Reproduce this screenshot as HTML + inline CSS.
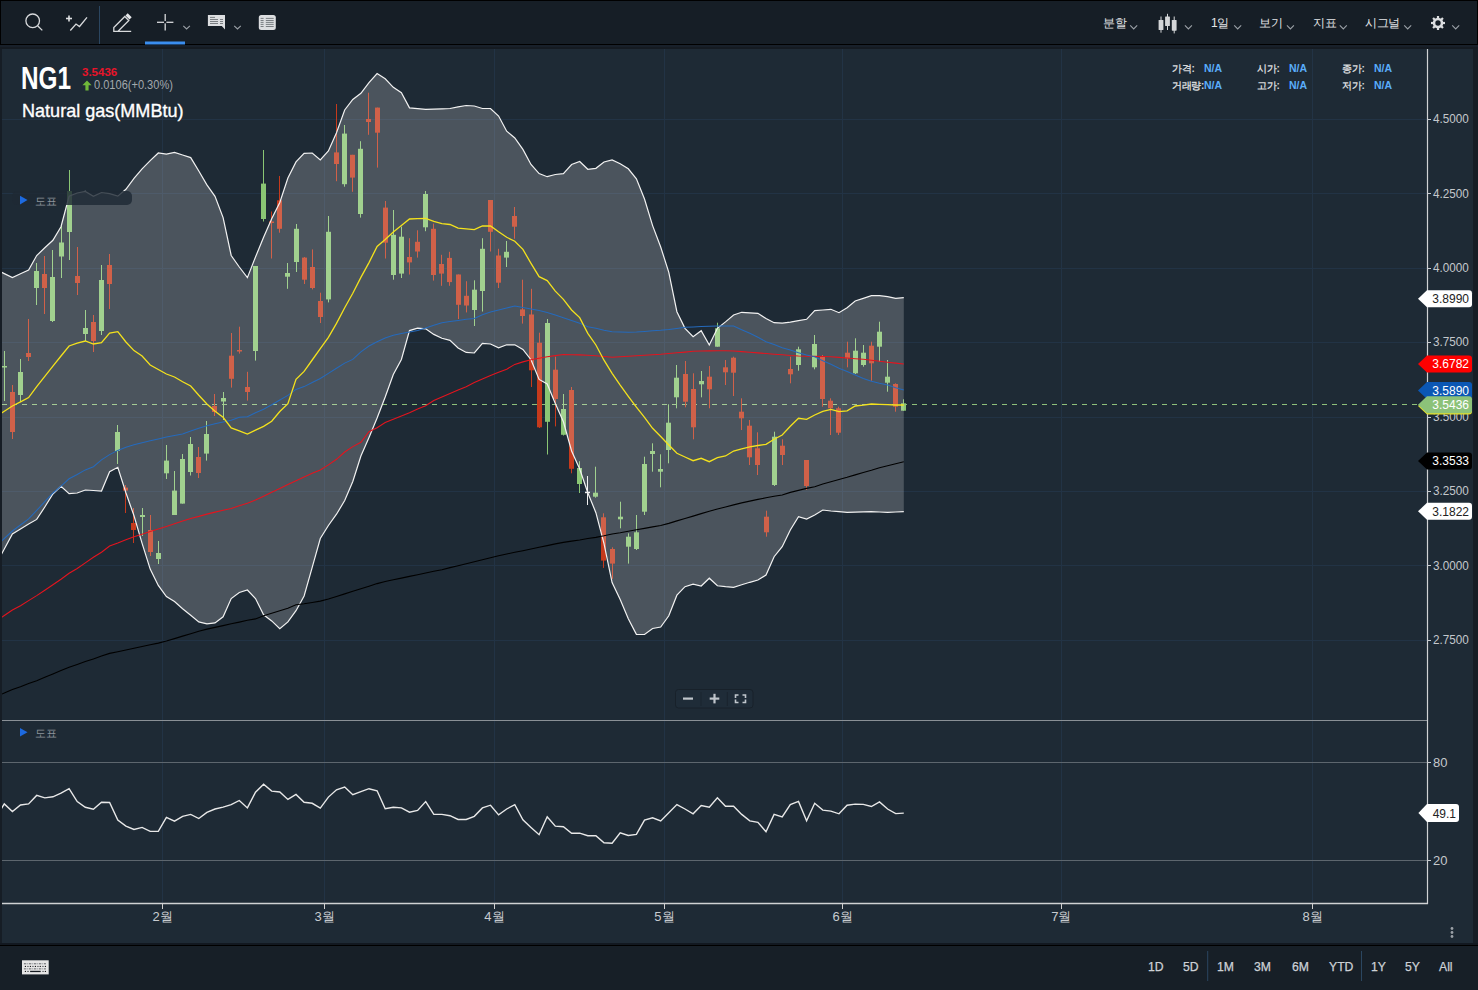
<!DOCTYPE html>
<html><head><meta charset="utf-8">
<style>
html,body{margin:0;padding:0;}
body{width:1478px;height:990px;overflow:hidden;background:#161d25;position:relative;font-family:"Liberation Sans",sans-serif;}
.abs{position:absolute;}
svg text{font-family:"Liberation Sans",sans-serif;}
.ax{font-size:12.7px;fill:#c4c8cc;}
.dt{font-size:13px;fill:#c8ccd0;}
.tg{font-size:12px;}
.tb{color:#e4e6e8;font-size:12px;letter-spacing:-0.3px;}
.bt{font-size:12.2px;color:#cdd1d6;position:absolute;top:960px;-webkit-text-stroke:0.25px #cdd1d6;}
</style></head>
<body>
<!-- toolbar -->
<div class="abs" style="left:0;top:0;width:1478px;height:44px;background:#161e26;border-top:1px solid #000;border-left:1px solid #000;border-right:1px solid #000;box-sizing:border-box;"></div>
<div class="abs" style="left:0;top:44px;width:1478px;height:1px;background:#000;"></div>
<div class="abs" style="left:0;top:45px;width:1478px;height:2px;background:#18202a;"></div><div class="abs" style="left:0;top:47px;width:1478px;height:2px;background:#151b22;"></div>
<!-- chart area bg -->
<div class="abs" style="left:2px;top:49px;width:1471px;height:894px;background:#1e2a35;"></div>
<div class="abs" style="left:0;top:943px;width:1478px;height:2px;background:#121820;"></div>
<div class="abs" style="left:0;top:945px;width:1478px;height:1px;background:#000;"></div>
<div class="abs" style="left:0;top:946px;width:1478px;height:44px;background:#171f27;"></div>
<svg class="abs" style="left:0;top:0" width="1478" height="990" viewBox="0 0 1478 990">
<defs>
<clipPath id="cm"><rect x="2" y="49" width="1425" height="671"/></clipPath>
<clipPath id="cr"><rect x="2" y="721" width="1425" height="182"/></clipPath>
</defs>
<g stroke="#223345" stroke-width="1">
<line x1="2" y1="119.5" x2="1427" y2="119.5"/>
<line x1="2" y1="193.5" x2="1427" y2="193.5"/>
<line x1="2" y1="268.5" x2="1427" y2="268.5"/>
<line x1="2" y1="342.5" x2="1427" y2="342.5"/>
<line x1="2" y1="417.5" x2="1427" y2="417.5"/>
<line x1="2" y1="491.5" x2="1427" y2="491.5"/>
<line x1="2" y1="565.5" x2="1427" y2="565.5"/>
<line x1="2" y1="640.5" x2="1427" y2="640.5"/>
<line x1="162.5" y1="49" x2="162.5" y2="903"/>
<line x1="324.5" y1="49" x2="324.5" y2="903"/>
<line x1="494.5" y1="49" x2="494.5" y2="903"/>
<line x1="664.5" y1="49" x2="664.5" y2="903"/>
<line x1="842.5" y1="49" x2="842.5" y2="903"/>
<line x1="1061.5" y1="49" x2="1061.5" y2="903"/>
<line x1="1312.5" y1="49" x2="1312.5" y2="903"/>
</g>
<g clip-path="url(#cm)">
<line x1="2" y1="404.5" x2="1418" y2="404.5" stroke="#8fbf7a" stroke-width="1.2" stroke-dasharray="5 5"/>
<rect x="4" y="351.0" width="1" height="50.0" fill="#8ac674"/>
<rect x="2" y="366.0" width="5" height="1.5" fill="#8ac674"/>
<rect x="12" y="385.0" width="1" height="54.0" fill="#c53a1c"/>
<rect x="10" y="392.0" width="5" height="40.0" fill="#c53a1c"/>
<rect x="20" y="359.0" width="1" height="43.0" fill="#8ac674"/>
<rect x="18" y="372.0" width="5" height="23.0" fill="#8ac674"/>
<rect x="28" y="319.0" width="1" height="42.0" fill="#c53a1c"/>
<rect x="26" y="353.0" width="5" height="4.0" fill="#c53a1c"/>
<rect x="36" y="263.0" width="1" height="42.0" fill="#8ac674"/>
<rect x="34" y="271.0" width="5" height="17.0" fill="#8ac674"/>
<rect x="44" y="256.0" width="1" height="58.0" fill="#c53a1c"/>
<rect x="42" y="274.0" width="5" height="14.0" fill="#c53a1c"/>
<rect x="52" y="250.0" width="1" height="72.0" fill="#8ac674"/>
<rect x="50" y="277.0" width="5" height="44.0" fill="#8ac674"/>
<rect x="61" y="226.0" width="1" height="52.0" fill="#8ac674"/>
<rect x="59" y="242.5" width="5" height="14.0" fill="#8ac674"/>
<rect x="69" y="170.0" width="1" height="90.0" fill="#8ac674"/>
<rect x="67" y="191.0" width="5" height="41.0" fill="#8ac674"/>
<rect x="77" y="247.0" width="1" height="48.0" fill="#c53a1c"/>
<rect x="75" y="276.0" width="5" height="7.0" fill="#c53a1c"/>
<rect x="85" y="310.0" width="1" height="31.0" fill="#8ac674"/>
<rect x="83" y="328.0" width="5" height="6.0" fill="#8ac674"/>
<rect x="93" y="315.0" width="1" height="37.0" fill="#c53a1c"/>
<rect x="91" y="322.0" width="5" height="19.0" fill="#c53a1c"/>
<rect x="101" y="265.0" width="1" height="70.0" fill="#8ac674"/>
<rect x="99" y="280.0" width="5" height="51.0" fill="#8ac674"/>
<rect x="109" y="254.0" width="1" height="55.0" fill="#c53a1c"/>
<rect x="107" y="265.0" width="5" height="19.0" fill="#c53a1c"/>
<rect x="117" y="425.0" width="1" height="39.0" fill="#8ac674"/>
<rect x="115" y="432.0" width="5" height="19.0" fill="#8ac674"/>
<rect x="125" y="485.0" width="1" height="28.0" fill="#c53a1c"/>
<rect x="123" y="487.6" width="5" height="3.0" fill="#c53a1c"/>
<rect x="133" y="508.0" width="1" height="35.0" fill="#c53a1c"/>
<rect x="131" y="523.0" width="5" height="7.0" fill="#c53a1c"/>
<rect x="142" y="508.0" width="1" height="28.0" fill="#8ac674"/>
<rect x="140" y="515.0" width="5" height="2.0" fill="#8ac674"/>
<rect x="150" y="515.0" width="1" height="41.0" fill="#c53a1c"/>
<rect x="148" y="530.0" width="5" height="22.0" fill="#c53a1c"/>
<rect x="158" y="541.0" width="1" height="23.0" fill="#8ac674"/>
<rect x="156" y="553.0" width="5" height="6.0" fill="#8ac674"/>
<rect x="166" y="445.0" width="1" height="34.0" fill="#8ac674"/>
<rect x="164" y="460.6" width="5" height="12.7" fill="#8ac674"/>
<rect x="174" y="471.0" width="1" height="44.0" fill="#8ac674"/>
<rect x="172" y="490.6" width="5" height="24.4" fill="#8ac674"/>
<rect x="182" y="454.0" width="1" height="49.6" fill="#8ac674"/>
<rect x="180" y="459.0" width="5" height="44.6" fill="#8ac674"/>
<rect x="190" y="437.0" width="1" height="38.5" fill="#8ac674"/>
<rect x="188" y="444.0" width="5" height="28.0" fill="#8ac674"/>
<rect x="198" y="447.0" width="1" height="31.0" fill="#c53a1c"/>
<rect x="196" y="457.0" width="5" height="16.0" fill="#c53a1c"/>
<rect x="206" y="421.0" width="1" height="39.6" fill="#8ac674"/>
<rect x="204" y="434.0" width="5" height="19.6" fill="#8ac674"/>
<rect x="214" y="394.0" width="1" height="22.0" fill="#c53a1c"/>
<rect x="212" y="406.0" width="5" height="6.0" fill="#c53a1c"/>
<rect x="223" y="392.0" width="1" height="28.0" fill="#8ac674"/>
<rect x="221" y="398.0" width="5" height="3.5" fill="#8ac674"/>
<rect x="231" y="333.0" width="1" height="54.6" fill="#c53a1c"/>
<rect x="229" y="355.7" width="5" height="23.1" fill="#c53a1c"/>
<rect x="239" y="326.7" width="1" height="26.9" fill="#c53a1c"/>
<rect x="237" y="350.0" width="5" height="1.5" fill="#c53a1c"/>
<rect x="247" y="371.8" width="1" height="28.8" fill="#c53a1c"/>
<rect x="245" y="387.0" width="5" height="5.0" fill="#c53a1c"/>
<rect x="255" y="266.0" width="1" height="94.6" fill="#8ac674"/>
<rect x="253" y="266.0" width="5" height="85.0" fill="#8ac674"/>
<rect x="263" y="150.0" width="1" height="71.5" fill="#8ac674"/>
<rect x="261" y="183.6" width="5" height="35.4" fill="#8ac674"/>
<rect x="271" y="211.5" width="1" height="47.0" fill="#c53a1c"/>
<rect x="269" y="221.5" width="5" height="1.5" fill="#c53a1c"/>
<rect x="279" y="176.0" width="1" height="56.7" fill="#c53a1c"/>
<rect x="277" y="200.3" width="5" height="28.5" fill="#c53a1c"/>
<rect x="287" y="263.0" width="1" height="25.8" fill="#8ac674"/>
<rect x="285" y="273.0" width="5" height="3.7" fill="#8ac674"/>
<rect x="296" y="224.0" width="1" height="48.0" fill="#8ac674"/>
<rect x="294" y="228.8" width="5" height="33.2" fill="#8ac674"/>
<rect x="304" y="257.0" width="1" height="27.0" fill="#c53a1c"/>
<rect x="302" y="257.6" width="5" height="22.1" fill="#c53a1c"/>
<rect x="312" y="249.4" width="1" height="40.0" fill="#c53a1c"/>
<rect x="310" y="267.0" width="5" height="21.0" fill="#c53a1c"/>
<rect x="320" y="292.7" width="1" height="30.3" fill="#c53a1c"/>
<rect x="318" y="301.0" width="5" height="16.0" fill="#c53a1c"/>
<rect x="328" y="216.0" width="1" height="86.4" fill="#8ac674"/>
<rect x="326" y="231.8" width="5" height="67.6" fill="#8ac674"/>
<rect x="336" y="104.0" width="1" height="77.2" fill="#c53a1c"/>
<rect x="334" y="152.4" width="5" height="11.6" fill="#c53a1c"/>
<rect x="344" y="125.0" width="1" height="61.7" fill="#8ac674"/>
<rect x="342" y="133.6" width="5" height="50.6" fill="#8ac674"/>
<rect x="352" y="154.8" width="1" height="37.0" fill="#c53a1c"/>
<rect x="350" y="154.8" width="5" height="22.8" fill="#c53a1c"/>
<rect x="360" y="141.2" width="1" height="76.4" fill="#8ac674"/>
<rect x="358" y="148.8" width="5" height="65.2" fill="#8ac674"/>
<rect x="368" y="92.7" width="1" height="42.1" fill="#c53a1c"/>
<rect x="366" y="119.0" width="5" height="3.0" fill="#c53a1c"/>
<rect x="377" y="107.6" width="1" height="60.0" fill="#c53a1c"/>
<rect x="375" y="107.6" width="5" height="25.1" fill="#c53a1c"/>
<rect x="385" y="201.0" width="1" height="57.5" fill="#c53a1c"/>
<rect x="383" y="207.6" width="5" height="35.1" fill="#c53a1c"/>
<rect x="393" y="210.0" width="1" height="69.7" fill="#8ac674"/>
<rect x="391" y="234.8" width="5" height="40.2" fill="#8ac674"/>
<rect x="401" y="226.7" width="1" height="51.3" fill="#8ac674"/>
<rect x="399" y="236.7" width="5" height="36.9" fill="#8ac674"/>
<rect x="409" y="238.2" width="1" height="36.3" fill="#c53a1c"/>
<rect x="407" y="257.0" width="5" height="5.4" fill="#c53a1c"/>
<rect x="417" y="230.3" width="1" height="27.3" fill="#c53a1c"/>
<rect x="415" y="241.8" width="5" height="9.7" fill="#c53a1c"/>
<rect x="425" y="191.0" width="1" height="40.2" fill="#8ac674"/>
<rect x="423" y="194.0" width="5" height="33.3" fill="#8ac674"/>
<rect x="433" y="223.6" width="1" height="57.0" fill="#c53a1c"/>
<rect x="431" y="228.8" width="5" height="46.2" fill="#c53a1c"/>
<rect x="441" y="254.8" width="1" height="31.0" fill="#c53a1c"/>
<rect x="439" y="264.0" width="5" height="9.6" fill="#c53a1c"/>
<rect x="449" y="251.8" width="1" height="34.0" fill="#c53a1c"/>
<rect x="447" y="257.9" width="5" height="24.2" fill="#c53a1c"/>
<rect x="458" y="274.5" width="1" height="44.5" fill="#c53a1c"/>
<rect x="456" y="274.5" width="5" height="30.3" fill="#c53a1c"/>
<rect x="466" y="281.2" width="1" height="31.2" fill="#c53a1c"/>
<rect x="464" y="295.8" width="5" height="9.7" fill="#c53a1c"/>
<rect x="474" y="280.3" width="1" height="45.7" fill="#8ac674"/>
<rect x="472" y="289.7" width="5" height="20.3" fill="#8ac674"/>
<rect x="482" y="238.2" width="1" height="73.3" fill="#8ac674"/>
<rect x="480" y="248.8" width="5" height="42.2" fill="#8ac674"/>
<rect x="490" y="200.0" width="1" height="51.5" fill="#c53a1c"/>
<rect x="488" y="200.0" width="5" height="31.8" fill="#c53a1c"/>
<rect x="498" y="248.8" width="1" height="39.2" fill="#c53a1c"/>
<rect x="496" y="255.5" width="5" height="27.2" fill="#c53a1c"/>
<rect x="506" y="241.0" width="1" height="26.0" fill="#8ac674"/>
<rect x="504" y="251.8" width="5" height="5.8" fill="#8ac674"/>
<rect x="514" y="207.0" width="1" height="31.8" fill="#c53a1c"/>
<rect x="512" y="216.0" width="5" height="10.7" fill="#c53a1c"/>
<rect x="522" y="279.7" width="1" height="43.9" fill="#c53a1c"/>
<rect x="520" y="309.4" width="5" height="6.6" fill="#c53a1c"/>
<rect x="531" y="288.8" width="1" height="98.2" fill="#c53a1c"/>
<rect x="529" y="314.5" width="5" height="55.8" fill="#c53a1c"/>
<rect x="539" y="332.7" width="1" height="95.3" fill="#c53a1c"/>
<rect x="537" y="342.7" width="5" height="84.6" fill="#c53a1c"/>
<rect x="547" y="319.0" width="1" height="135.5" fill="#8ac674"/>
<rect x="545" y="323.0" width="5" height="98.8" fill="#8ac674"/>
<rect x="555" y="356.7" width="1" height="69.7" fill="#c53a1c"/>
<rect x="553" y="369.7" width="5" height="29.3" fill="#c53a1c"/>
<rect x="563" y="394.0" width="1" height="41.5" fill="#8ac674"/>
<rect x="561" y="409.0" width="5" height="25.8" fill="#8ac674"/>
<rect x="571" y="387.0" width="1" height="86.3" fill="#c53a1c"/>
<rect x="569" y="390.0" width="5" height="78.8" fill="#c53a1c"/>
<rect x="579" y="461.2" width="1" height="31.8" fill="#8ac674"/>
<rect x="577" y="468.0" width="5" height="16.0" fill="#8ac674"/>
<rect x="587" y="476.0" width="1" height="29.0" fill="#f0f0f0"/>
<rect x="585" y="491.7" width="5" height="1.5" fill="#f0f0f0"/>
<rect x="595" y="466.7" width="1" height="31.0" fill="#8ac674"/>
<rect x="593" y="492.7" width="5" height="4.0" fill="#8ac674"/>
<rect x="603" y="513.3" width="1" height="54.6" fill="#c53a1c"/>
<rect x="601" y="517.3" width="5" height="43.3" fill="#c53a1c"/>
<rect x="612" y="547.3" width="1" height="31.5" fill="#c53a1c"/>
<rect x="610" y="549.0" width="5" height="14.6" fill="#c53a1c"/>
<rect x="620" y="501.7" width="1" height="26.6" fill="#8ac674"/>
<rect x="618" y="516.7" width="5" height="2.6" fill="#8ac674"/>
<rect x="628" y="533.3" width="1" height="30.3" fill="#8ac674"/>
<rect x="626" y="536.7" width="5" height="10.0" fill="#8ac674"/>
<rect x="636" y="515.0" width="1" height="35.0" fill="#8ac674"/>
<rect x="634" y="532.3" width="5" height="16.7" fill="#8ac674"/>
<rect x="644" y="456.7" width="1" height="58.3" fill="#8ac674"/>
<rect x="642" y="464.0" width="5" height="47.7" fill="#8ac674"/>
<rect x="652" y="443.3" width="1" height="28.4" fill="#8ac674"/>
<rect x="650" y="451.0" width="5" height="3.0" fill="#8ac674"/>
<rect x="660" y="454.3" width="1" height="33.0" fill="#8ac674"/>
<rect x="658" y="469.0" width="5" height="2.7" fill="#8ac674"/>
<rect x="668" y="404.3" width="1" height="59.0" fill="#8ac674"/>
<rect x="666" y="422.7" width="5" height="27.3" fill="#8ac674"/>
<rect x="676" y="365.0" width="1" height="43.3" fill="#8ac674"/>
<rect x="674" y="377.7" width="5" height="19.6" fill="#8ac674"/>
<rect x="685" y="361.0" width="1" height="46.3" fill="#c53a1c"/>
<rect x="683" y="374.0" width="5" height="27.7" fill="#c53a1c"/>
<rect x="693" y="373.3" width="1" height="66.0" fill="#c53a1c"/>
<rect x="691" y="389.0" width="5" height="38.3" fill="#c53a1c"/>
<rect x="701" y="371.0" width="1" height="26.3" fill="#8ac674"/>
<rect x="699" y="381.0" width="5" height="3.3" fill="#8ac674"/>
<rect x="709" y="366.0" width="1" height="42.3" fill="#c53a1c"/>
<rect x="707" y="376.7" width="5" height="12.6" fill="#c53a1c"/>
<rect x="717" y="322.7" width="1" height="24.0" fill="#8ac674"/>
<rect x="715" y="328.3" width="5" height="18.4" fill="#8ac674"/>
<rect x="725" y="360.0" width="1" height="25.0" fill="#c53a1c"/>
<rect x="723" y="367.3" width="5" height="5.0" fill="#c53a1c"/>
<rect x="733" y="356.7" width="1" height="39.3" fill="#c53a1c"/>
<rect x="731" y="357.7" width="5" height="15.0" fill="#c53a1c"/>
<rect x="741" y="398.3" width="1" height="31.7" fill="#c53a1c"/>
<rect x="739" y="411.7" width="5" height="6.6" fill="#c53a1c"/>
<rect x="749" y="420.0" width="1" height="45.0" fill="#c53a1c"/>
<rect x="747" y="425.7" width="5" height="31.6" fill="#c53a1c"/>
<rect x="757" y="432.3" width="1" height="42.7" fill="#c53a1c"/>
<rect x="755" y="448.3" width="5" height="16.7" fill="#c53a1c"/>
<rect x="766" y="510.7" width="1" height="26.0" fill="#c53a1c"/>
<rect x="764" y="516.7" width="5" height="15.6" fill="#c53a1c"/>
<rect x="774" y="431.7" width="1" height="54.3" fill="#8ac674"/>
<rect x="772" y="436.7" width="5" height="48.3" fill="#8ac674"/>
<rect x="782" y="439.3" width="1" height="25.7" fill="#c53a1c"/>
<rect x="780" y="445.7" width="5" height="9.3" fill="#c53a1c"/>
<rect x="790" y="356.7" width="1" height="26.6" fill="#c53a1c"/>
<rect x="788" y="369.0" width="5" height="5.3" fill="#c53a1c"/>
<rect x="798" y="346.7" width="1" height="24.0" fill="#8ac674"/>
<rect x="796" y="349.3" width="5" height="15.7" fill="#8ac674"/>
<rect x="806" y="460.0" width="1" height="30.0" fill="#c53a1c"/>
<rect x="804" y="460.0" width="5" height="26.0" fill="#c53a1c"/>
<rect x="814" y="335.0" width="1" height="34.3" fill="#8ac674"/>
<rect x="812" y="344.0" width="5" height="23.3" fill="#8ac674"/>
<rect x="822" y="355.0" width="1" height="51.7" fill="#c53a1c"/>
<rect x="820" y="356.7" width="5" height="42.3" fill="#c53a1c"/>
<rect x="830" y="398.3" width="1" height="36.7" fill="#c53a1c"/>
<rect x="828" y="400.7" width="5" height="7.6" fill="#c53a1c"/>
<rect x="838" y="406.7" width="1" height="28.3" fill="#c53a1c"/>
<rect x="836" y="408.3" width="5" height="24.4" fill="#c53a1c"/>
<rect x="847" y="341.7" width="1" height="25.6" fill="#c53a1c"/>
<rect x="845" y="352.7" width="5" height="5.6" fill="#c53a1c"/>
<rect x="855" y="338.3" width="1" height="35.7" fill="#8ac674"/>
<rect x="853" y="350.7" width="5" height="22.6" fill="#8ac674"/>
<rect x="863" y="345.0" width="1" height="21.7" fill="#8ac674"/>
<rect x="861" y="352.7" width="5" height="12.3" fill="#8ac674"/>
<rect x="871" y="341.7" width="1" height="39.0" fill="#c53a1c"/>
<rect x="869" y="345.7" width="5" height="17.6" fill="#c53a1c"/>
<rect x="879" y="321.7" width="1" height="40.0" fill="#8ac674"/>
<rect x="877" y="331.7" width="5" height="15.0" fill="#8ac674"/>
<rect x="887" y="360.0" width="1" height="31.7" fill="#8ac674"/>
<rect x="885" y="376.7" width="5" height="6.0" fill="#8ac674"/>
<rect x="895" y="383.3" width="1" height="28.4" fill="#c53a1c"/>
<rect x="893" y="384.0" width="5" height="22.7" fill="#c53a1c"/>
<rect x="903" y="399.3" width="1" height="11.4" fill="#8ac674"/>
<rect x="901" y="403.3" width="5" height="7.4" fill="#8ac674"/>
<polygon points="-3.8,269.6 4.3,273.6 12.4,277.6 20.5,273.8 28.6,270.0 36.7,255.5 44.8,247.8 52.9,240.3 61.0,226.7 69.1,196.3 77.2,193.0 85.3,191.4 93.4,196.3 101.5,192.5 109.6,193.6 117.8,196.1 125.9,189.3 134.0,178.4 142.1,168.9 150.2,160.6 158.3,153.0 166.4,154.1 174.5,152.4 182.6,155.0 190.7,157.6 198.8,171.0 206.9,184.9 215.0,196.4 223.1,217.6 231.2,255.5 239.3,267.0 247.4,277.6 255.5,257.0 263.6,237.3 271.7,218.7 279.8,202.4 287.9,178.0 296.0,161.9 304.1,153.3 312.2,153.0 320.3,160.0 328.4,151.0 336.5,132.7 344.7,110.0 352.8,99.4 360.9,93.3 369.0,82.7 377.1,73.6 385.2,78.8 393.3,87.3 401.4,92.7 409.5,107.9 417.6,108.6 425.7,109.4 433.8,109.1 441.9,108.8 450.0,108.5 458.1,106.9 466.2,105.5 474.3,106.0 482.4,108.5 490.5,108.5 498.6,116.0 506.7,131.2 514.8,138.0 522.9,149.4 531.0,164.5 539.1,173.6 547.2,176.7 555.3,174.5 563.4,173.6 571.6,164.5 579.7,161.5 587.8,169.3 595.9,168.3 604.0,162.0 612.1,160.0 620.2,163.7 628.3,168.8 636.4,178.9 644.5,199.0 652.6,225.6 660.7,247.0 668.8,272.3 676.9,311.7 685.0,328.3 693.1,336.7 701.2,330.7 709.3,345.0 717.4,328.3 725.5,321.9 733.6,315.0 741.7,312.3 749.8,312.8 757.9,313.3 766.0,318.6 774.1,322.7 782.2,323.2 790.3,322.1 798.5,320.7 806.6,319.3 814.7,310.7 822.8,310.0 830.9,309.3 839.0,312.7 847.1,307.7 855.2,301.0 863.3,298.4 871.4,295.7 879.5,295.7 887.6,296.7 895.7,298.3 903.8,297.7 903.8,511.7 895.7,512.0 887.6,512.3 879.5,512.0 871.4,511.7 863.3,511.9 855.2,512.1 847.1,512.3 839.0,511.6 830.9,511.0 822.8,510.0 814.7,515.0 806.6,519.0 798.5,516.7 790.3,530.0 782.2,546.7 774.1,556.7 766.0,575.0 757.9,580.0 749.8,582.3 741.7,584.8 733.6,587.3 725.5,586.7 717.4,585.8 709.3,578.2 701.2,586.0 693.1,584.2 685.0,586.7 676.9,595.2 668.8,615.8 660.7,627.0 652.6,628.5 644.5,634.5 636.4,634.3 628.3,618.8 620.2,599.4 612.1,582.5 604.0,543.6 595.9,512.7 587.8,492.7 579.7,469.0 571.6,451.0 563.4,421.8 555.3,403.6 547.2,384.0 539.1,379.4 531.0,359.7 522.9,349.4 514.8,344.8 506.7,344.8 498.6,347.9 490.5,344.0 482.4,343.3 474.3,353.0 466.2,352.4 458.1,347.9 450.0,340.3 441.9,338.3 433.8,334.4 425.7,328.8 417.6,328.2 409.5,330.6 401.4,359.5 393.3,374.5 385.2,397.0 377.1,418.0 369.0,437.5 360.9,456.0 352.8,481.5 344.7,500.6 336.5,514.2 328.4,525.5 320.3,538.5 312.2,567.3 304.1,596.0 296.0,610.7 287.9,621.9 279.8,628.6 271.7,620.9 263.6,614.8 255.5,598.6 247.4,590.0 239.3,592.5 231.2,598.6 223.1,616.8 215.0,622.9 206.9,623.9 198.8,621.9 190.7,615.2 182.6,608.7 174.5,601.6 166.4,596.5 158.3,585.4 150.2,569.1 142.1,543.4 134.0,515.8 125.9,492.8 117.8,467.3 109.6,471.8 101.5,491.0 93.4,490.5 85.3,490.0 77.2,493.0 69.1,493.6 61.0,486.4 52.9,494.0 44.8,507.0 36.7,519.4 28.6,524.0 20.5,529.0 12.4,534.0 4.3,549.0 -3.8,564.0" fill="rgba(255,255,255,0.2)"/>
<polyline points="-3.8,269.6 4.3,273.6 12.4,277.6 20.5,273.8 28.6,270.0 36.7,255.5 44.8,247.8 52.9,240.3 61.0,226.7 69.1,196.3 77.2,193.0 85.3,191.4 93.4,196.3 101.5,192.5 109.6,193.6 117.8,196.1 125.9,189.3 134.0,178.4 142.1,168.9 150.2,160.6 158.3,153.0 166.4,154.1 174.5,152.4 182.6,155.0 190.7,157.6 198.8,171.0 206.9,184.9 215.0,196.4 223.1,217.6 231.2,255.5 239.3,267.0 247.4,277.6 255.5,257.0 263.6,237.3 271.7,218.7 279.8,202.4 287.9,178.0 296.0,161.9 304.1,153.3 312.2,153.0 320.3,160.0 328.4,151.0 336.5,132.7 344.7,110.0 352.8,99.4 360.9,93.3 369.0,82.7 377.1,73.6 385.2,78.8 393.3,87.3 401.4,92.7 409.5,107.9 417.6,108.6 425.7,109.4 433.8,109.1 441.9,108.8 450.0,108.5 458.1,106.9 466.2,105.5 474.3,106.0 482.4,108.5 490.5,108.5 498.6,116.0 506.7,131.2 514.8,138.0 522.9,149.4 531.0,164.5 539.1,173.6 547.2,176.7 555.3,174.5 563.4,173.6 571.6,164.5 579.7,161.5 587.8,169.3 595.9,168.3 604.0,162.0 612.1,160.0 620.2,163.7 628.3,168.8 636.4,178.9 644.5,199.0 652.6,225.6 660.7,247.0 668.8,272.3 676.9,311.7 685.0,328.3 693.1,336.7 701.2,330.7 709.3,345.0 717.4,328.3 725.5,321.9 733.6,315.0 741.7,312.3 749.8,312.8 757.9,313.3 766.0,318.6 774.1,322.7 782.2,323.2 790.3,322.1 798.5,320.7 806.6,319.3 814.7,310.7 822.8,310.0 830.9,309.3 839.0,312.7 847.1,307.7 855.2,301.0 863.3,298.4 871.4,295.7 879.5,295.7 887.6,296.7 895.7,298.3 903.8,297.7" fill="none" stroke="#f2f2f2" stroke-width="1.2"/>
<polyline points="-3.8,564.0 4.3,549.0 12.4,534.0 20.5,529.0 28.6,524.0 36.7,519.4 44.8,507.0 52.9,494.0 61.0,486.4 69.1,493.6 77.2,493.0 85.3,490.0 93.4,490.5 101.5,491.0 109.6,471.8 117.8,467.3 125.9,492.8 134.0,515.8 142.1,543.4 150.2,569.1 158.3,585.4 166.4,596.5 174.5,601.6 182.6,608.7 190.7,615.2 198.8,621.9 206.9,623.9 215.0,622.9 223.1,616.8 231.2,598.6 239.3,592.5 247.4,590.0 255.5,598.6 263.6,614.8 271.7,620.9 279.8,628.6 287.9,621.9 296.0,610.7 304.1,596.0 312.2,567.3 320.3,538.5 328.4,525.5 336.5,514.2 344.7,500.6 352.8,481.5 360.9,456.0 369.0,437.5 377.1,418.0 385.2,397.0 393.3,374.5 401.4,359.5 409.5,330.6 417.6,328.2 425.7,328.8 433.8,334.4 441.9,338.3 450.0,340.3 458.1,347.9 466.2,352.4 474.3,353.0 482.4,343.3 490.5,344.0 498.6,347.9 506.7,344.8 514.8,344.8 522.9,349.4 531.0,359.7 539.1,379.4 547.2,384.0 555.3,403.6 563.4,421.8 571.6,451.0 579.7,469.0 587.8,492.7 595.9,512.7 604.0,543.6 612.1,582.5 620.2,599.4 628.3,618.8 636.4,634.3 644.5,634.5 652.6,628.5 660.7,627.0 668.8,615.8 676.9,595.2 685.0,586.7 693.1,584.2 701.2,586.0 709.3,578.2 717.4,585.8 725.5,586.7 733.6,587.3 741.7,584.8 749.8,582.3 757.9,580.0 766.0,575.0 774.1,556.7 782.2,546.7 790.3,530.0 798.5,516.7 806.6,519.0 814.7,515.0 822.8,510.0 830.9,511.0 839.0,511.6 847.1,512.3 855.2,512.1 863.3,511.9 871.4,511.7 879.5,512.0 887.6,512.3 895.7,512.0 903.8,511.7" fill="none" stroke="#f2f2f2" stroke-width="1.2"/>
<polyline points="-3.8,696.5 4.3,693.0 12.4,689.5 20.5,686.7 28.6,683.4 36.7,680.7 44.8,677.3 52.9,673.9 61.0,670.5 69.1,667.2 77.2,664.4 85.3,661.6 93.4,658.9 101.5,656.1 109.6,653.4 117.8,651.7 125.9,650.0 134.0,648.2 142.1,646.5 150.2,644.8 158.3,643.1 166.4,641.0 174.5,638.6 182.6,636.1 190.7,633.7 198.8,631.3 206.9,629.1 215.0,627.4 223.1,625.6 231.2,623.8 239.3,622.1 247.4,620.3 255.5,618.9 263.6,615.8 271.7,613.3 279.8,610.7 287.9,608.2 296.0,604.8 304.1,603.8 312.2,602.5 320.3,601.1 328.4,599.0 336.5,596.4 344.7,593.9 352.8,591.3 360.9,588.7 369.0,586.2 377.1,583.6 385.2,581.5 393.3,579.8 401.4,578.1 409.5,576.4 417.6,574.7 425.7,573.0 433.8,571.3 441.9,569.7 450.0,567.6 458.1,565.7 466.2,563.7 474.3,561.7 482.4,559.8 490.5,557.8 498.6,555.8 506.7,554.0 514.8,552.3 522.9,550.7 531.0,549.0 539.1,547.3 547.2,545.6 555.3,543.9 563.4,542.4 571.6,541.1 579.7,540.0 587.8,538.5 595.9,537.4 604.0,535.8 612.1,534.0 620.2,532.8 628.3,531.3 636.4,529.8 644.5,528.4 652.6,526.9 660.7,525.5 668.8,523.4 676.9,520.9 685.0,518.5 693.1,516.1 701.2,513.6 709.3,511.2 717.4,509.0 725.5,507.0 733.6,504.9 741.7,502.9 749.8,501.1 757.9,499.4 766.0,497.8 774.1,496.2 782.2,495.0 790.3,492.4 798.5,490.4 806.6,488.4 814.7,486.7 822.8,484.0 830.9,481.8 839.0,479.5 847.1,477.3 855.2,474.9 863.3,472.5 871.4,470.2 879.5,467.7 887.6,465.7 895.7,463.7 903.8,461.7" fill="none" stroke="#000" stroke-width="1.1"/>
<polyline points="-3.8,621.0 4.3,615.5 12.4,610.0 20.5,605.7 28.6,600.6 36.7,595.6 44.8,590.2 52.9,584.8 61.0,579.3 69.1,573.2 77.2,568.5 85.3,562.9 93.4,557.3 101.5,552.2 109.6,546.0 117.8,543.1 125.9,539.7 134.0,536.7 142.1,534.2 150.2,531.6 158.3,529.0 166.4,526.4 174.5,523.8 182.6,521.1 190.7,518.5 198.8,516.4 206.9,514.1 215.0,512.1 223.1,510.2 231.2,508.5 239.3,505.7 247.4,503.3 255.5,500.1 263.6,496.2 271.7,492.3 279.8,488.5 287.9,484.6 296.0,480.7 304.1,476.9 312.2,473.2 320.3,469.9 328.4,464.9 336.5,459.3 344.7,452.0 352.8,446.6 360.9,442.3 369.0,431.7 377.1,427.7 385.2,422.5 393.3,419.2 401.4,416.1 409.5,412.8 417.6,408.9 425.7,405.8 433.8,400.6 441.9,396.9 450.0,393.6 458.1,390.1 466.2,386.7 474.3,382.5 482.4,379.0 490.5,375.5 498.6,372.3 506.7,369.2 514.8,364.4 522.9,361.9 531.0,359.7 539.1,358.2 547.2,356.7 555.3,355.6 563.4,354.5 571.6,354.7 579.7,354.9 587.8,355.2 595.9,355.7 604.0,356.5 612.1,357.3 620.2,356.8 628.3,356.3 636.4,355.8 644.5,355.2 652.6,354.7 660.7,354.2 668.8,353.5 676.9,352.8 685.0,352.1 693.1,351.3 701.2,351.0 709.3,350.9 717.4,350.8 725.5,350.7 733.6,351.0 741.7,351.6 749.8,352.2 757.9,352.9 766.0,353.5 774.1,354.2 782.2,354.8 790.3,355.5 798.5,356.0 806.6,356.2 814.7,356.4 822.8,356.5 830.9,356.7 839.0,357.4 847.1,358.0 855.2,358.7 863.3,359.3 871.4,360.3 879.5,361.2 887.6,362.2 895.7,363.1 903.8,364.0" fill="none" stroke="#e4141e" stroke-width="1.1"/>
<polyline points="-3.8,546.0 4.3,538.5 12.4,531.0 20.5,525.0 28.6,518.8 36.7,510.4 44.8,501.7 52.9,493.0 61.0,486.2 69.1,478.8 77.2,474.5 85.3,469.9 93.4,466.7 101.5,459.8 109.6,454.6 117.8,450.4 125.9,447.2 134.0,444.8 142.1,442.8 150.2,440.8 158.3,438.9 166.4,437.1 174.5,435.4 182.6,434.0 190.7,431.0 198.8,428.2 206.9,425.8 215.0,423.8 223.1,421.9 231.2,420.3 239.3,417.3 247.4,416.7 255.5,412.7 263.6,409.3 271.7,404.7 279.8,400.0 287.9,395.4 296.0,389.4 304.1,386.6 312.2,382.5 320.3,378.5 328.4,373.4 336.5,368.3 344.7,363.1 352.8,359.4 360.9,351.9 369.0,346.0 377.1,341.8 385.2,338.0 393.3,335.2 401.4,333.6 409.5,332.1 417.6,330.6 425.7,327.9 433.8,325.2 441.9,322.7 450.0,321.5 458.1,320.4 466.2,319.3 474.3,318.5 482.4,314.7 490.5,312.1 498.6,310.0 506.7,307.9 514.8,306.0 522.9,307.4 531.0,308.9 539.1,310.6 547.2,312.4 555.3,315.0 563.4,317.7 571.6,320.5 579.7,323.2 587.8,326.7 595.9,328.2 604.0,330.2 612.1,331.7 620.2,332.0 628.3,332.2 636.4,332.1 644.5,331.4 652.6,330.8 660.7,330.2 668.8,329.4 676.9,328.4 685.0,327.3 693.1,327.0 701.2,326.6 709.3,326.2 717.4,326.0 725.5,326.0 733.6,326.0 741.7,329.8 749.8,333.3 757.9,337.3 766.0,341.7 774.1,344.6 782.2,347.7 790.3,350.0 798.5,352.7 806.6,354.9 814.7,356.7 822.8,360.8 830.9,364.3 839.0,368.3 847.1,371.4 855.2,375.0 863.3,378.5 871.4,381.2 879.5,383.2 887.6,385.0 895.7,387.7 903.8,390.0" fill="none" stroke="#256abc" stroke-width="1.05"/>
<polyline points="-3.8,416.4 4.3,411.2 12.4,406.0 20.5,401.9 28.6,397.6 36.7,386.6 44.8,376.4 52.9,366.2 61.0,356.0 69.1,346.0 77.2,343.1 85.3,341.0 93.4,344.0 101.5,342.6 109.6,333.0 117.8,331.7 125.9,342.0 134.0,350.6 142.1,356.0 150.2,365.0 158.3,369.5 166.4,374.0 174.5,377.0 182.6,381.7 190.7,386.0 198.8,395.3 206.9,404.0 215.0,411.2 223.1,417.3 231.2,427.9 239.3,430.9 247.4,434.0 255.5,430.1 263.6,426.4 271.7,421.2 279.8,411.5 287.9,403.6 296.0,379.4 304.1,371.4 312.2,360.0 320.3,348.6 328.4,337.3 336.5,323.4 344.7,307.7 352.8,293.3 360.9,277.4 369.0,262.6 377.1,246.4 385.2,239.5 393.3,232.0 401.4,225.5 409.5,219.0 417.6,218.7 425.7,218.5 433.8,221.4 441.9,223.6 450.0,224.5 458.1,228.2 466.2,228.8 474.3,229.7 482.4,225.8 490.5,226.0 498.6,231.8 506.7,237.3 514.8,241.2 522.9,249.4 531.0,263.3 539.1,276.7 547.2,280.6 555.3,291.1 563.4,299.4 571.6,310.0 579.7,317.6 587.8,333.3 595.9,345.0 604.0,360.2 612.1,373.3 620.2,385.1 628.3,396.3 636.4,407.2 644.5,417.3 652.6,428.3 660.7,436.5 668.8,445.0 676.9,453.3 685.0,457.0 693.1,460.7 701.2,458.3 709.3,461.7 717.4,457.7 725.5,456.0 733.6,451.0 741.7,448.9 749.8,446.8 757.9,445.5 766.0,444.3 774.1,439.2 782.2,435.0 790.3,426.3 798.5,418.3 806.6,419.3 814.7,415.0 822.8,411.4 830.9,409.3 839.0,411.7 847.1,410.8 855.2,406.0 863.3,405.1 871.4,404.0 879.5,404.3 887.6,404.7 895.7,405.0 903.8,405.0" fill="none" stroke="#f4e21c" stroke-width="1.3"/>
</g>
<!-- panel divider -->
<line x1="2" y1="720.5" x2="1427" y2="720.5" stroke="#8a9096" stroke-width="1"/>
<line x1="2" y1="762.5" x2="1427" y2="762.5" stroke="#5d666e" stroke-width="1"/>
<line x1="2" y1="860.5" x2="1427" y2="860.5" stroke="#5d666e" stroke-width="1"/>
<g clip-path="url(#cr)">
<polyline points="-3.8,817.0 4.3,803.9 12.4,811.5 20.5,805.0 28.6,803.9 36.7,795.4 44.8,797.9 52.9,796.8 61.0,793.1 69.1,788.6 77.2,801.6 85.3,807.3 93.4,809.2 101.5,802.2 109.6,802.5 117.8,820.0 125.9,826.1 134.0,829.5 142.1,827.4 150.2,831.4 158.3,831.4 166.4,817.4 174.5,821.1 182.6,816.3 190.7,814.4 198.8,818.5 206.9,812.4 215.0,809.0 223.1,807.1 231.2,804.6 239.3,800.5 247.4,807.9 255.5,792.2 263.6,784.3 271.7,791.1 279.8,792.0 287.9,799.4 296.0,794.4 304.1,802.3 312.2,803.3 320.3,808.1 328.4,797.1 336.5,789.8 344.7,787.0 352.8,794.7 360.9,791.7 369.0,788.7 377.1,790.8 385.2,808.8 393.3,807.3 401.4,807.9 409.5,812.2 417.6,810.4 425.7,801.6 433.8,814.4 441.9,814.4 450.0,815.7 458.1,819.5 466.2,819.5 474.3,816.3 482.4,807.9 490.5,805.2 498.6,814.9 506.7,809.0 514.8,804.6 522.9,819.8 531.0,827.4 539.1,834.7 547.2,816.8 555.3,826.1 563.4,826.8 571.6,833.3 579.7,833.1 587.8,835.7 595.9,835.7 604.0,842.7 612.1,843.3 620.2,832.8 628.3,835.5 636.4,834.4 644.5,820.1 652.6,817.8 660.7,820.9 668.8,812.8 676.9,804.6 685.0,809.0 693.1,813.8 701.2,805.5 709.3,807.3 717.4,797.8 725.5,806.3 733.6,806.3 741.7,814.4 749.8,820.9 757.9,822.3 766.0,831.7 774.1,814.4 782.2,816.9 790.3,804.6 798.5,801.4 806.6,820.7 814.7,803.3 822.8,810.1 830.9,811.1 839.0,813.8 847.1,805.2 855.2,804.1 863.3,804.4 871.4,806.5 879.5,801.9 887.6,809.0 895.7,813.6 903.8,813.1" fill="none" stroke="#e8e8e8" stroke-width="1.4"/>
</g>
<!-- axes -->
<line x1="1427.5" y1="49" x2="1427.5" y2="904" stroke="#d0d2d4" stroke-width="1.2"/>
<line x1="2" y1="903.5" x2="1428" y2="903.5" stroke="#d0d2d4" stroke-width="1.4"/>
<line x1="1427" y1="119.5" x2="1431" y2="119.5" stroke="#c8ccd0" stroke-width="1"/>
<text transform="translate(1432.9,123.1) scale(0.923,1)" class="ax">4.5000</text>
<line x1="1427" y1="193.5" x2="1431" y2="193.5" stroke="#c8ccd0" stroke-width="1"/>
<text transform="translate(1432.9,197.5) scale(0.923,1)" class="ax">4.2500</text>
<line x1="1427" y1="268.5" x2="1431" y2="268.5" stroke="#c8ccd0" stroke-width="1"/>
<text transform="translate(1432.9,272.0) scale(0.923,1)" class="ax">4.0000</text>
<line x1="1427" y1="342.5" x2="1431" y2="342.5" stroke="#c8ccd0" stroke-width="1"/>
<text transform="translate(1432.9,346.4) scale(0.923,1)" class="ax">3.7500</text>
<line x1="1427" y1="417.5" x2="1431" y2="417.5" stroke="#c8ccd0" stroke-width="1"/>
<text transform="translate(1432.9,420.9) scale(0.923,1)" class="ax">3.5000</text>
<line x1="1427" y1="491.5" x2="1431" y2="491.5" stroke="#c8ccd0" stroke-width="1"/>
<text transform="translate(1432.9,495.3) scale(0.923,1)" class="ax">3.2500</text>
<line x1="1427" y1="565.5" x2="1431" y2="565.5" stroke="#c8ccd0" stroke-width="1"/>
<text transform="translate(1432.9,569.8) scale(0.923,1)" class="ax">3.0000</text>
<line x1="1427" y1="640.5" x2="1431" y2="640.5" stroke="#c8ccd0" stroke-width="1"/>
<text transform="translate(1432.9,644.2) scale(0.923,1)" class="ax">2.7500</text>
<line x1="1427" y1="762.5" x2="1431" y2="762.5" stroke="#c8ccd0"/>
<text x="1433" y="767" class="ax" style="font-size:13px">80</text>
<line x1="1427" y1="860.5" x2="1431" y2="860.5" stroke="#c8ccd0"/>
<text x="1433" y="865" class="ax" style="font-size:13px">20</text>
<line x1="162.5" y1="903" x2="162.5" y2="909" stroke="#d0d0d0" stroke-width="1"/>
<text x="162.6" y="921" class="dt" text-anchor="middle">2월</text>
<line x1="324.5" y1="903" x2="324.5" y2="909" stroke="#d0d0d0" stroke-width="1"/>
<text x="324.5" y="921" class="dt" text-anchor="middle">3월</text>
<line x1="494.5" y1="903" x2="494.5" y2="909" stroke="#d0d0d0" stroke-width="1"/>
<text x="494.4" y="921" class="dt" text-anchor="middle">4월</text>
<line x1="664.5" y1="903" x2="664.5" y2="909" stroke="#d0d0d0" stroke-width="1"/>
<text x="664.4" y="921" class="dt" text-anchor="middle">5월</text>
<line x1="842.5" y1="903" x2="842.5" y2="909" stroke="#d0d0d0" stroke-width="1"/>
<text x="842.5" y="921" class="dt" text-anchor="middle">6월</text>
<line x1="1061.5" y1="903" x2="1061.5" y2="909" stroke="#d0d0d0" stroke-width="1"/>
<text x="1061.3" y="921" class="dt" text-anchor="middle">7월</text>
<line x1="1312.5" y1="903" x2="1312.5" y2="909" stroke="#d0d0d0" stroke-width="1"/>
<text x="1312.5" y="921" class="dt" text-anchor="middle">8월</text>
<path d="M1418,298.8 L1427,290.3 L1469,290.3 Q1472,290.3 1472,293.3 L1472,304.3 Q1472,307.3 1469,307.3 L1427,307.3 Z" fill="#ffffff"/><text x="1469" y="303.0" class="tg" text-anchor="end" fill="#222">3.8990</text>
<path d="M1418,364.0 L1427,355.5 L1469,355.5 Q1472,355.5 1472,358.5 L1472,369.5 Q1472,372.5 1469,372.5 L1427,372.5 Z" fill="#ff0000"/><text x="1469" y="368.2" class="tg" text-anchor="end" fill="#fff">3.6782</text>
<path d="M1418,390.6 L1427,382.1 L1469,382.1 Q1472,382.1 1472,385.1 L1472,396.1 Q1472,399.1 1469,399.1 L1427,399.1 Z" fill="#0b57b4"/><text x="1469" y="394.8" class="tg" text-anchor="end" fill="#fff">3.5890</text>
<path d="M1418,406.0 L1427,397.5 L1469,397.5 Q1472,397.5 1472,400.5 L1472,411.5 Q1472,414.5 1469,414.5 L1427,414.5 Z" fill="#e4df2a"/>
<path d="M1418,404.8 L1427,396.3 L1469,396.3 Q1472,396.3 1472,399.3 L1472,410.3 Q1472,413.3 1469,413.3 L1427,413.3 Z" fill="#8cc279"/><text x="1469" y="409.0" class="tg" text-anchor="end" fill="#fff">3.5436</text>
<path d="M1418,460.9 L1427,452.4 L1469,452.4 Q1472,452.4 1472,455.4 L1472,466.4 Q1472,469.4 1469,469.4 L1427,469.4 Z" fill="#000000"/><text x="1469" y="465.1" class="tg" text-anchor="end" fill="#fff">3.3533</text>
<path d="M1418,511.3 L1427,502.8 L1469,502.8 Q1472,502.8 1472,505.8 L1472,516.8 Q1472,519.8 1469,519.8 L1427,519.8 Z" fill="#ffffff"/><text x="1469" y="515.5" class="tg" text-anchor="end" fill="#222">3.1822</text>
<path d="M1418.4,812.9 L1427,804 L1456,804 Q1459,804 1459,807 L1459,819 Q1459,822 1456,822 L1427,822 Z" fill="#fff"/>
<text x="1456" y="817.5" class="tg" text-anchor="end" fill="#222">49.1</text>
<!-- label boxes -->
<rect x="12" y="191" width="120" height="14" rx="5" fill="rgba(30,42,53,0.82)"/>
<path d="M20,195.8 L27.5,200.1 L20,204.4 Z" fill="#1d6ae0"/>
<text x="34.5" y="205" style="font-size:11px;fill:#8d949b">도표</text>
<path d="M20,728 L27.5,732.3 L20,736.6 Z" fill="#1d6ae0"/>
<text x="34.5" y="737" style="font-size:11px;fill:#8d949b">도표</text>
<!-- zoom control -->
<rect x="675.5" y="689.5" width="77.5" height="18.5" rx="3" fill="#1f2c38" stroke="#18212a" stroke-width="1"/>
<line x1="701" y1="692" x2="701" y2="706" stroke="#1a242e"/>
<line x1="727.3" y1="692" x2="727.3" y2="706" stroke="#1a242e"/>
<rect x="683" y="697.5" width="10" height="2.2" fill="#c0c6cc"/>
<rect x="709.7" y="697.5" width="9.6" height="2.2" fill="#c0c6cc"/>
<rect x="713.4" y="693.8" width="2.2" height="9.6" fill="#c0c6cc"/>
<path d="M735.5,698 V695 H738.5 M742.5,695 H745.5 V698 M745.5,699.5 V702.5 H742.5 M738.5,702.5 H735.5 V699.5" fill="none" stroke="#c0c6cc" stroke-width="1.6"/>
<!-- toolbar icons -->
<g fill="none" stroke="#d8dadc" stroke-width="1.3">
<circle cx="32.7" cy="20.8" r="6.8"/>
<line x1="37.6" y1="25.7" x2="42.3" y2="30.4"/>
<polyline points="70.3,30.5 76,24 79.5,26.5 87,17.3"/>
<path d="M118,31.3 L113.8,31.3 L113.8,27.5 L124.8,16.5 L128.8,20.5 L117.8,31.5 M114,31.3 H131.2"/>
<line x1="165.2" y1="14" x2="165.2" y2="30.5"/>
<line x1="157" y1="22.3" x2="173.4" y2="22.3"/>
</g>
<path d="M127.7,13.2 L131.7,17.2 L129.5,19.4 L125.5,15.4 Z" fill="#e6e8ea"/>
<g stroke="#e0e2e4" stroke-width="1.6"><line x1="66" y1="18.5" x2="72" y2="18.5"/><line x1="69" y1="15.5" x2="69" y2="21.5"/></g>
<rect x="164" y="21" width="2.4" height="2.4" fill="#161d25"/>
<g fill="none" stroke="#9aa0a6" stroke-width="1.1">
<polyline points="183.3,25.8 186.6,29 189.9,25.8"/>
<polyline points="234.2,25.8 237.5,29 240.8,25.8"/>
</g>
<path d="M207.9,15 H225 V29.6 L221.8,26 H207.9 Z" fill="#dcdee0"/>
<g stroke="#6e7377" stroke-width="0.9">
<line x1="210" y1="17.4" x2="215" y2="17.4"/>
<line x1="210" y1="19.5" x2="218" y2="19.5"/><line x1="220" y1="19.5" x2="223" y2="19.5"/>
<line x1="210" y1="21.5" x2="218" y2="21.5"/><line x1="220" y1="21.5" x2="223" y2="21.5"/>
<line x1="210" y1="23.5" x2="218" y2="23.5"/><line x1="220" y1="23.5" x2="223" y2="23.5"/>
</g>
<rect x="258.8" y="15" width="17" height="14.9" rx="2.5" fill="#dcdee0"/>
<g stroke="#6e7377" stroke-width="0.9">
<line x1="260.6" y1="18.4" x2="263.6" y2="18.4"/><line x1="265.8" y1="18.4" x2="273.7" y2="18.4"/>
<line x1="260.6" y1="20.5" x2="263.6" y2="20.5"/><line x1="265.8" y1="20.5" x2="273.7" y2="20.5"/>
<line x1="260.6" y1="22.4" x2="263.6" y2="22.4"/><line x1="265.8" y1="22.4" x2="273.7" y2="22.4"/>
<line x1="260.6" y1="24.4" x2="263.6" y2="24.4"/><line x1="265.8" y1="24.4" x2="273.7" y2="24.4"/>
<line x1="260.6" y1="26.5" x2="263.6" y2="26.5"/><line x1="265.8" y1="26.5" x2="273.7" y2="26.5"/>
</g>
<rect x="145" y="41.5" width="40" height="3" fill="#3a8ef0"/>
<line x1="99.5" y1="6" x2="99.5" y2="44" stroke="#2b4660" stroke-width="1"/>
<!-- candle icon right -->
<g fill="#d4d6d8">
<rect x="1160.5" y="16.5" width="1" height="16.2"/><rect x="1158.6" y="19.9" width="4.8" height="10.1" rx="0.6"/>
<rect x="1167" y="13.8" width="1" height="16.2"/><rect x="1165.1" y="16.5" width="4.8" height="9.5" rx="0.6"/>
<rect x="1173.7" y="16.5" width="1" height="16.9"/><rect x="1171.8" y="19.9" width="4.8" height="10.8" rx="0.6"/>
</g>
<g fill="none" stroke="#9aa0a6" stroke-width="1.1">
<polyline points="1130.2,25.4 1133.7,28.9 1137.2,25.4"/>
<polyline points="1184.9,25.4 1188.4,28.9 1191.9,25.4"/>
<polyline points="1234.2,25.4 1237.7,28.9 1241.2,25.4"/>
<polyline points="1286.9,25.4 1290.4,28.9 1293.9,25.4"/>
<polyline points="1339.8,25.4 1343.3,28.9 1346.8,25.4"/>
<polyline points="1404.2,25.4 1407.7,28.9 1411.2,25.4"/>
<polyline points="1452.2,25.4 1455.7,28.9 1459.2,25.4"/>
</g>
<g transform="translate(1438,23)" fill="#dcdee0"><rect x="-1.1" y="-7" width="2.2" height="3" transform="rotate(0)"/><rect x="-1.1" y="-7" width="2.2" height="3" transform="rotate(45)"/><rect x="-1.1" y="-7" width="2.2" height="3" transform="rotate(90)"/><rect x="-1.1" y="-7" width="2.2" height="3" transform="rotate(135)"/><rect x="-1.1" y="-7" width="2.2" height="3" transform="rotate(180)"/><rect x="-1.1" y="-7" width="2.2" height="3" transform="rotate(225)"/><rect x="-1.1" y="-7" width="2.2" height="3" transform="rotate(270)"/><rect x="-1.1" y="-7" width="2.2" height="3" transform="rotate(315)"/><circle r="5.3"/><circle r="2.7" fill="#161e26"/></g>
<!-- bottom bar separators -->
<line x1="1207.7" y1="951" x2="1207.7" y2="981" stroke="#2b4660"/>
<line x1="1361.5" y1="951" x2="1361.5" y2="981" stroke="#2b4660"/>
<!-- 3 dots -->
<circle cx="1452" cy="928.5" r="1.4" fill="#9aa0a6"/><circle cx="1452" cy="932.5" r="1.4" fill="#9aa0a6"/><circle cx="1452" cy="936.5" r="1.4" fill="#9aa0a6"/>
<!-- keyboard -->
<rect x="22" y="960.3" width="26.7" height="14.1" fill="#e6e6e6"/>
<rect x="23.9" y="963.2" width="2" height="1.1" fill="#6a6d70"/>
<rect x="28.9" y="963.2" width="2" height="1.1" fill="#6a6d70"/>
<rect x="33.9" y="963.2" width="2" height="1.1" fill="#6a6d70"/>
<rect x="38.9" y="963.2" width="2" height="1.1" fill="#6a6d70"/>
<rect x="43.9" y="963.2" width="2" height="1.1" fill="#6a6d70"/>
<rect x="26.4" y="963.2" width="1.8" height="1.1" fill="#a0a3a6"/>
<rect x="31.4" y="963.2" width="1.8" height="1.1" fill="#a0a3a6"/>
<rect x="36.4" y="963.2" width="1.8" height="1.1" fill="#a0a3a6"/>
<rect x="41.4" y="963.2" width="1.8" height="1.1" fill="#a0a3a6"/>
<rect x="23.9" y="968.3" width="2" height="1.1" fill="#6a6d70"/>
<rect x="28.9" y="968.3" width="2" height="1.1" fill="#6a6d70"/>
<rect x="33.9" y="968.3" width="2" height="1.1" fill="#6a6d70"/>
<rect x="38.9" y="968.3" width="2" height="1.1" fill="#6a6d70"/>
<rect x="43.9" y="968.3" width="2" height="1.1" fill="#6a6d70"/>
<rect x="26.4" y="968.3" width="1.8" height="1.1" fill="#a0a3a6"/>
<rect x="31.4" y="968.3" width="1.8" height="1.1" fill="#a0a3a6"/>
<rect x="36.4" y="968.3" width="1.8" height="1.1" fill="#a0a3a6"/>
<rect x="41.4" y="968.3" width="1.8" height="1.1" fill="#a0a3a6"/>
<circle cx="25.4" cy="966.4" r="0.65" fill="#111"/>
<circle cx="30.4" cy="966.4" r="0.65" fill="#111"/>
<circle cx="35.4" cy="966.4" r="0.65" fill="#111"/>
<circle cx="40.3" cy="966.4" r="0.65" fill="#111"/>
<circle cx="45.4" cy="966.4" r="0.65" fill="#111"/>
<rect x="27.0" y="965.9" width="1.8" height="1" fill="#707376"/>
<rect x="32.0" y="965.9" width="1.8" height="1" fill="#707376"/>
<rect x="37.0" y="965.9" width="1.8" height="1" fill="#707376"/>
<rect x="42.0" y="965.9" width="1.8" height="1" fill="#707376"/>
<circle cx="25.4" cy="971.4" r="0.65" fill="#111"/><circle cx="45.4" cy="971.4" r="0.65" fill="#111"/>
<rect x="27" y="970.9" width="2" height="1" fill="#707376"/><rect x="42.1" y="970.9" width="2" height="1" fill="#707376"/>
<rect x="30.1" y="970.8" width="10.6" height="1.3" fill="#151a20"/>
</svg>

<!-- title -->
<div class="abs" style="left:21px;top:60px;font-size:32px;font-weight:bold;color:#fff;transform:scaleX(0.76);transform-origin:left top;line-height:37px;">NG1</div>
<div class="abs" style="left:82px;top:66px;font-size:11.5px;font-weight:bold;color:#e8142a;line-height:13px;">3.5436</div>
<svg class="abs" style="left:82px;top:80px" width="10" height="11"><path d="M5,0.5 L9.6,5.2 L6.6,5.2 L6.6,10.5 L3.4,10.5 L3.4,5.2 L0.4,5.2 Z" fill="#6fb83a"/></svg>
<div class="abs" style="left:94px;top:78px;font-size:12px;color:#a3a8ad;transform:scaleX(0.92);transform-origin:left top;">0.0106(+0.30%)</div>
<div class="abs" style="left:22px;top:100px;font-size:19px;color:#fff;transform:scaleX(0.95);transform-origin:left top;line-height:22px;-webkit-text-stroke:0.35px #fff;">Natural gas(MMBtu)</div>

<!-- info -->
<div class="abs" style="left:1172px;top:60px;font-size:10px;color:#d6d8da;font-weight:bold;line-height:17px;letter-spacing:-0.3px;">가격:<br>거래량:</div>
<div class="abs" style="left:1204px;top:60px;font-size:10.5px;color:#5aaefc;font-weight:bold;line-height:17px;">N/A<br>N/A</div>
<div class="abs" style="left:1257px;top:60px;font-size:10px;color:#d6d8da;font-weight:bold;line-height:17px;letter-spacing:-0.3px;">시가:<br>고가:</div>
<div class="abs" style="left:1289px;top:60px;font-size:10.5px;color:#5aaefc;font-weight:bold;line-height:17px;">N/A<br>N/A</div>
<div class="abs" style="left:1342px;top:60px;font-size:10px;color:#d6d8da;font-weight:bold;line-height:17px;letter-spacing:-0.3px;">종가:<br>저가:</div>
<div class="abs" style="left:1374px;top:60px;font-size:10.5px;color:#5aaefc;font-weight:bold;line-height:17px;">N/A<br>N/A</div>

<!-- toolbar text -->
<div class="abs tb" style="left:1103px;top:15px;">분할</div>
<div class="abs tb" style="left:1211px;top:15px;">1일</div>
<div class="abs tb" style="left:1259px;top:15px;">보기</div>
<div class="abs tb" style="left:1313px;top:15px;">지표</div>
<div class="abs tb" style="left:1365px;top:15px;">시그널</div>

<!-- bottom buttons -->
<div class="bt" style="left:1148px;">1D</div>
<div class="bt" style="left:1183px;">5D</div>
<div class="bt" style="left:1217px;">1M</div>
<div class="bt" style="left:1254px;">3M</div>
<div class="bt" style="left:1292px;">6M</div>
<div class="bt" style="left:1329px;">YTD</div>
<div class="bt" style="left:1371px;">1Y</div>
<div class="bt" style="left:1405px;">5Y</div>
<div class="bt" style="left:1439px;">All</div>
</body></html>
